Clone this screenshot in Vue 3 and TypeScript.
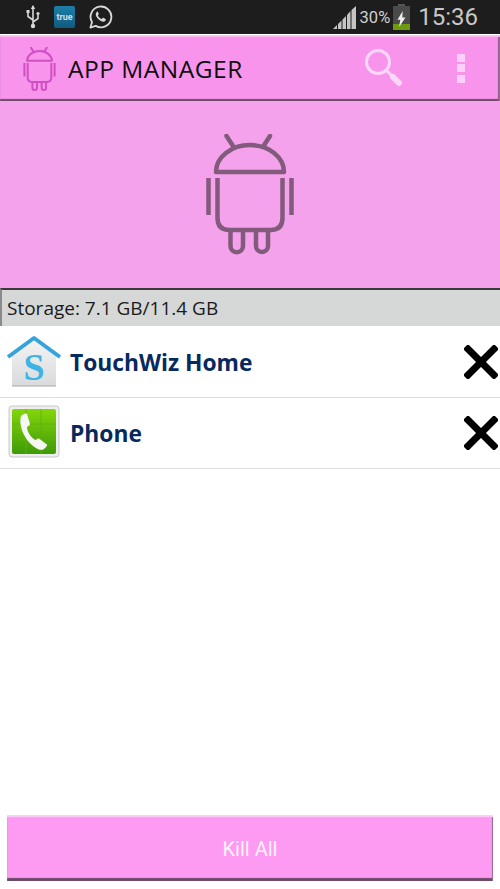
<script setup lang="ts">
const apps = [
  { name: 'TouchWiz Home', icon: 'home' },
  { name: 'Phone', icon: 'phone' }
];
</script>

<template>
  <div class="screen">
    <header class="status-bar">
      <div class="status-left">
        <svg class="usb" width="16" height="24" viewBox="0 0 16 24" fill="none" stroke="#d8d8d8" stroke-width="1.6">
          <path d="M8 1v21M8 15 3 11.5V8M8 17l5-3.5V10" />
          <rect x="1.5" y="5" width="3" height="3" fill="#d8d8d8" stroke="none" />
          <circle cx="13" cy="8.5" r="1.6" fill="#d8d8d8" stroke="none" />
          <path d="M8 0 5.8 4h4.4z" fill="#d8d8d8" stroke="none" />
          <circle cx="8" cy="21" r="2.2" fill="#d8d8d8" stroke="none" />
        </svg>
        <div class="true-badge">true</div>
        <svg width="25" height="26" viewBox="0 0 26 26" fill="none">
          <path d="M2.5 24l1.7-5.6A10.8 10.8 0 1 1 8 22.2z" stroke="#d8d8d8" stroke-width="1.9" stroke-linejoin="round" />
          <path d="M9.6 7.6c-.6.3-1.7 1.3-1.5 3 .3 2.5 3.7 6.4 6.9 7.2 1.7.4 3-.6 3.4-1.5.2-.6.1-1-.2-1.2l-2.3-1.2c-.4-.2-.7 0-.9.3l-.8 1c-1.5-.4-3.4-2.3-4-3.8l.8-.9c.3-.3.3-.6.2-.9l-1-2c-.2-.4-.6-.5-.9-.4z" fill="#d8d8d8" />
        </svg>
      </div>
      <div class="status-right">
        <svg class="signal" width="23" height="23" viewBox="0 0 23 23" fill="#c4c4c4">
          <path d="M0 23 4 19v4zM5 18l3.5-3.500V23H5zM9.500 13.500 13 10v13H9.500zM14 9l3.500-4v18H14zM18.500 4 23 0v23h-4.500z" />
        </svg>
        <span class="battery-pct">30%</span>
        <div class="battery">
          <div class="battery-cap"></div>
          <div class="battery-body">
            <div class="battery-level"></div>
            <svg class="bolt" width="11" height="16" viewBox="0 0 12 20" fill="#eeeeee">
              <path d="M7.5 0 1 11h3.500L3 20l8-12H7z" />
            </svg>
          </div>
        </div>
        <span class="clock">15:36</span>
      </div>
    </header>

    <div class="app-bar">
      <svg class="bar-logo" width="33" height="44" viewBox="0 0 90 121" fill="none" stroke="#d050c4" stroke-width="5.5">
        <path d="M21.500 2 28 12M65 2l-6.500 10" stroke-linecap="round" />
        <path d="M11 38A34 27 0 0 1 79 38Z" stroke-linejoin="round" />
        <path d="M3.500 44v37M86.500 44v37" />
        <path d="M12.500 44v40q0 12 12 12h41q12 0 12-12V44" />
        <path d="M25.500 97v15a6.250 6.250 0 0 0 12.500 0V97M51 97v15a6 6 0 0 0 12 0V97" />
      </svg>
      <h1 class="bar-title">APP MANAGER</h1>
      <svg class="search" width="40" height="40" viewBox="0 0 40 40" fill="none" stroke="#fbd8f8" stroke-linecap="round">
        <circle cx="14" cy="14" r="11.500" stroke-width="3" />
        <path d="M22 22l5 5" stroke-width="3" />
        <path d="M29 29l6 6" stroke-width="6" />
      </svg>
      <div class="overflow">
        <span></span><span></span><span></span>
      </div>
    </div>

    <div class="hero">
      <svg width="90" height="121" viewBox="0 0 90 121" fill="none" stroke="#815a7c" stroke-width="4.500">
        <path d="M21.500 2 28 12M65 2l-6.500 10" stroke-linecap="round" />
        <path d="M11 38A34 27 0 0 1 79 38Z" stroke-linejoin="round" />
        <path d="M3.500 44v37M86.500 44v37" />
        <path d="M12.500 44v40q0 12 12 12h41q12 0 12-12V44" />
        <path d="M25.500 97v15a6.250 6.250 0 0 0 12.500 0V97M51 97v15a6 6 0 0 0 12 0V97" />
      </svg>
    </div>

    <div class="storage">Storage: 7.1 GB/11.4 GB</div>

    <ul class="app-list">
      <li v-for="app in apps" :key="app.name" class="app-row">
        <svg v-if="app.icon === 'home'" class="app-icon" width="56" height="56" viewBox="0 0 56 56">
          <defs>
            <linearGradient id="wall" x1="0" y1="0" x2="0" y2="1">
              <stop offset="0" stop-color="#f4f4f4" />
              <stop offset="1" stop-color="#d8dadc" />
            </linearGradient>
          </defs>
          <path d="M6 21 28 5l22 16v31H6z" fill="url(#wall)" />
          <path d="M6 52h44" stroke="#a8a8a8" stroke-width="1.2" />
          <path d="M2 23 28 4l26 19" fill="none" stroke="#35a4dc" stroke-width="4" stroke-linejoin="round" />
          <text x="28" y="46" text-anchor="middle" class="s-letter">S</text>
        </svg>
        <svg v-else class="app-icon" width="56" height="56" viewBox="0 0 56 56">
          <defs>
            <linearGradient id="green" x1="0" y1="0" x2="0" y2="1">
              <stop offset="0" stop-color="#84d60a" />
              <stop offset="1" stop-color="#3f9a08" />
            </linearGradient>
          </defs>
          <rect x="3" y="1" width="50" height="51" rx="3" fill="#eeeeee" stroke="#c8c8c8" />
          <rect x="6" y="4" width="44" height="45" rx="2" fill="url(#green)" />
          <path d="M20 4v45M35 4v45M6 19h44M6 34h44" stroke="#5fae12" stroke-width=".8" />
          <path d="M15 11c2-2 5-3 6-2l3 10c0 1.500-2 2-3 3 0 5 4 10 8 13 1.500-.5 2.500-2 4-1.500l8 6c.5 1-1 3-3 4.500-2 1.500-5 1-8-1C20 37 12 22 15 11z" fill="#f6f6f2" />
        </svg>
        <span class="app-name">{{ app.name }}</span>
        <svg class="close" width="34" height="34" viewBox="0 0 34 34" stroke="#000" stroke-width="7" stroke-linecap="square">
          <path d="M4 4l26 26M30 4 4 30" />
        </svg>
      </li>
    </ul>

    <div class="footer">
      <button class="kill-all">Kill All</button>
    </div>
  </div>
</template>

<style scoped>
.screen {
  width: 500px;
  height: 889px;
  display: flex;
  flex-direction: column;
  background: #fff;
  font-family: "Open Sans", Roboto, sans-serif;
  overflow: hidden;
}

.status-bar {
  height: 34px;
  flex-shrink: 0;
  background: #1d1d1d;
  display: flex;
  align-items: center;
  justify-content: space-between;
  padding: 0 22px 0 25px;
}

.status-left {
  display: flex;
  align-items: center;
  gap: 13px;
}

.true-badge {
  width: 21px;
  height: 22px;
  border-radius: 2px;
  background: linear-gradient(#1d7fa8, #125a80);
  color: #c8dde8;
  font-family: Roboto, sans-serif;
  font-size: 9px;
  font-weight: 700;
  line-height: 22px;
  text-align: center;
}

.status-right {
  display: flex;
  align-items: center;
}

.signal {
  margin-right: 4px;
}

.battery-pct {
  color: #d0d0d0;
  font-family: Roboto, sans-serif;
  font-size: 16.5px;
  margin-right: 3px;
}

.battery {
  width: 17px;
  height: 26px;
  display: flex;
  flex-direction: column;
  align-items: center;
  margin-right: 8px;
}

.battery-cap {
  width: 7px;
  height: 2px;
  background: #555;
}

.battery-body {
  width: 17px;
  flex: 1;
  background: #4a4a4a;
  position: relative;
}

.battery-level {
  position: absolute;
  left: 0;
  right: 0;
  bottom: 0;
  height: 6px;
  background: #6f9a10;
}

.bolt {
  position: absolute;
  left: 3px;
  top: 5px;
}

.clock {
  color: #c8c8c8;
  font-family: Roboto, sans-serif;
  font-size: 24px;
}

.app-bar {
  height: 66px;
  flex-shrink: 0;
  margin-top: 1px;
  display: flex;
  align-items: center;
  background: #f894ec;
  box-shadow: inset 0 2px 1px #fbc0f4, inset -2px 0 1px #8a5f84, inset 0 -2px 1px #6c4a68;
  padding-left: 23px;
}

.bar-logo {
  margin-right: 12px;
  margin-top: 2px;
}

.bar-title {
  margin: 0;
  flex: 1;
  color: #0c0c0c;
  font-size: 24.5px;
  font-weight: 400;
  letter-spacing: .5px;
}

.search {
  margin-right: 53px;
}

.overflow {
  display: flex;
  flex-direction: column;
  gap: 2.5px;
  margin-right: 35px;
}

.overflow span {
  width: 8px;
  height: 8px;
  background: #fcd0f8;
}

.hero {
  height: 187px;
  flex-shrink: 0;
  display: flex;
  align-items: center;
  justify-content: center;
  background: #f4a2ec;
  box-sizing: border-box;
}

.storage {
  height: 38px;
  flex-shrink: 0;
  box-sizing: border-box;
  background: #d6d8d8;
  border-top: 2px solid #3a3a3a;
  border-left: 2px solid #8a8a8a;
  padding-left: 5px;
  color: #1a1a1a;
  font-size: 19px;
  line-height: 36px;
}

.app-list {
  list-style: none;
  margin: 0;
  padding: 1px 0 0;
}

.app-row {
  height: 71px;
  box-sizing: border-box;
  display: flex;
  align-items: center;
  border-bottom: 1px solid #dedede;
  padding-left: 6px;
  padding-right: 2px;
}

.app-icon {
  flex-shrink: 0;
  margin-right: 8px;
}

.s-letter {
  font-family: "Liberation Serif", serif;
  font-size: 38px;
  font-weight: 700;
  fill: #3cb4e6;
}

.app-name {
  flex: 1;
  color: #06295e;
  font-size: 22.8px;
  font-weight: 700;
}

.close {
  flex-shrink: 0;
}

.footer {
  margin-top: auto;
  padding: 0 7px 8px;
}

.kill-all {
  display: block;
  width: 100%;
  height: 66px;
  border: 0;
  padding: 1px 0 0;
  background: #fd9af2;
  box-shadow: inset 0 2px 1px #fcd0f8, inset -1px 0 1px #8a5f84, inset 0 -3px 1px #6c4a68;
  color: #fff3fd;
  font-family: Roboto, sans-serif;
  font-size: 20px;
  cursor: pointer;
}
</style>
